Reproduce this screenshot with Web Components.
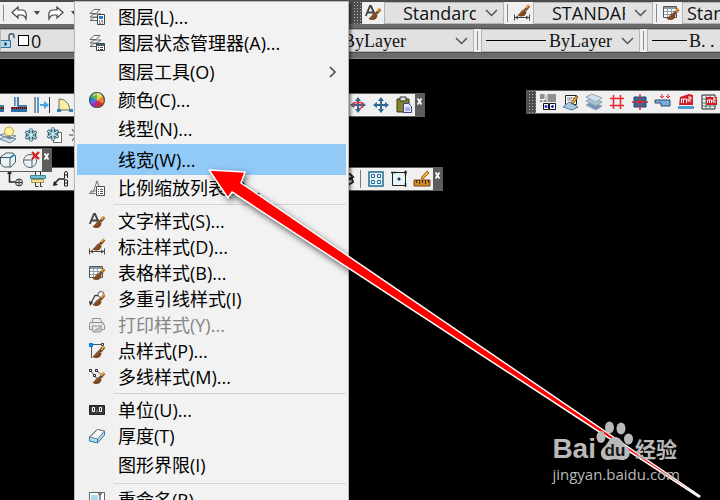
<!DOCTYPE html>
<html lang="zh-CN">
<head>
<meta charset="utf-8">
<title>格式</title>
<style>
  html, body {
    margin: 0;
    height: 100%;
    background: #000;
    font-family: "Open Sans", "Noto Sans CJK SC", sans-serif;
  }
</style>
</head>
<body>
<cad-window></cad-window>

<script>
const brush = `
  <path d="M15.2 4 11.5 8.5" stroke="#9a5a22" stroke-width="3"/>
  <path d="M14.8 3.6 12.4 6.6" stroke="#f0a83c" stroke-width="1.4"/>
  <path d="M12.4 7.4 9.6 9.2" stroke="#444" stroke-width="1.4"/>
  <path d="M10.6 8.2C7 7.6 7 11.6 3.6 13.4c2.6 2.4 8 2.6 9-3z" fill="#7a4822"/>
  <path d="M10 9.4c-2 0-2 2-3.4 3" stroke="#a56a3a"/>`
const stack = `<g stroke="#666" fill="#fafafa"><path d="M1 11.5h7l4-3H5zM1 8h7l4-3H5zM1 4.5h6l4-4H5z"/></g>`
const flake = `<g stroke="#2f5f70" stroke-width="3"><path d="M8 1.5v13M2.500 4.500l11 7M2.500 11.500l11-7"/><path d="M5.500 3.500 8 5.500l2.500-2M5.500 12.500l2.500-2 2.500 2M3.500 6.500v3m9-3v3" stroke-width="1.500"/></g>
  <g stroke="#d7f2f6" stroke-width="1.4"><path d="M8 2v12M3 5l10 6M3 11l10-6"/></g>`
const cross = color => `<path d="M8 2v12M2 8h12" stroke="${color}" stroke-width="2"/>
  <path d="M8 0 5 4h6zM8 16l-3-4h6zM0 8l4-3v6zM16 8l-4-3v6z" fill="${color}"/>`

const icons = {
  layer: stack + `<path d="M8.5 5.5h7v10h-7z" fill="#fff" stroke="#35474f"/><path d="M10 7h4v3h-4z" fill="#2a7cc0"/><path d="M10 12h1m1 0h2m-4 2h2m1 0h1" stroke="#333"/>`,
  layerState: stack + `<path d="M7.5 8.5h8v7h-8z" fill="#f4f6f7" stroke="#35474f"/><path d="M8 9h7v2H8z" fill="#4b5c66"/><path d="M9 12.5h1m1 0h3m-5 2h1m1 0h3" stroke="#444"/>`,
  color: `<g><path d="M8 8V0a8 8 0 0 1 6.9 4z" fill="#e7d53a"/><path d="M8 8 14.9 4a8 8 0 0 1 0 8z" fill="#f08035"/><path d="M8 8l6.9 4A8 8 0 0 1 8 16z" fill="#d82f2d"/><path d="M8 8v8a8 8 0 0 1-6.9-4z" fill="#a02fc0"/><path d="M8 8 1.1 12a8 8 0 0 1 0-8z" fill="#2f7be0"/><path d="M8 8 1.1 4A8 8 0 0 1 8 0z" fill="#54b63a"/></g><circle cx="8" cy="8" r="7.4" stroke="#555" stroke-width="1.2"/><path d="M4 3.5c2-2 6-2 8 0" stroke="#fff" opacity=".5" stroke-width="2"/>`,
  scale: `<path d="M8 1 4.5 11M8 1l2 5M2 12c4 0 6-2 7-5M.5 13.500h6M.5 13.500 3 10" stroke="#777"/><circle cx="8" cy="2" r="1.3" fill="#888"/><path d="M7.500 6.500h8v9h-8z" fill="#fff" stroke="#44515a"/><path d="M9 9.500h1m1 0h3m-5 2h1m1 0h3m-5 2h1m1 0h3" stroke="#555"/>`,
  text: `<path d="M.8 11 5 1h1l4 9M2.500 7.500h6" stroke="#454545" stroke-width="1.900"/>` + brush,
  dim: `<path d="M.5 9.500v6m15-6v6M1 12.500h14" stroke="#454545"/><path d="m1 12.500 3-2v4zm14 0-3-2v4z" fill="#454545"/><g transform="translate(0 -3.500)">${brush}</g>`,
  table: `<path d="M.5 1.500h13v11H.5z" fill="#fff" stroke="#555"/><path d="M1 2h12v2H1z" fill="#8799a3"/><path d="M1 6.500h12M1 9.500h12M4.500 4v8M8.500 4v8" stroke="#8ba0aa"/>` + brush,
  leader: `<circle cx="12" cy="3.500" r="3" fill="#fff" stroke="#555"/><path d="M9 4.500H6L2 12" stroke="#454545" stroke-width="1.300"/><path d="m0 10 4 1.500L1 15z" fill="#333"/>` + brush,
  plot: `<g stroke="#8f8f8f" fill="#ececec"><path d="M3.500 5V1.500h8l1 3.500"/><path d="M1 5.500h13l1.500 3v4H.500v-5z"/><path d="M3 9h9v6H4z"/></g><path d="M15 5 9 11c-3 0-3 2-5 3 3 2 6 1 7-2z" fill="#b5b5b5"/>`,
  point: `<path d="M2.500 2v13M3 1.500h11M4 14.500 13 4" stroke="#555"/><path d="M0 0h4v4H0z" fill="#0a84e8"/><path d="M12.500.500h2v2h-2z" fill="#fff" stroke="#333"/>` + brush,
  mline: `<path d="m2 2 3 4m3-4 5 4M5 7l4 3" stroke="#555"/><g fill="#fff" stroke="#222"><path d="M.5.500h2v2h-2zM6.500.500h2v2h-2zM4.500 5.500h2v2h-2z"/></g>` + brush,
  units: `<path d="M.5 3.500h15v9H.5z" fill="#3a3a3a" stroke="#222"/><g stroke="#fff"><path d="M3.500 5.500h2v4h-2zM10.500 5.500h2v4h-2zM7.500 9h1"/></g>`,
  thickness: `<path d="M.5 9 8 1.500l7.500 1.500v4l-7 8L.5 13z" fill="#a9dcf5" stroke="#3477a5"/><path d="M1 9 8.500 1.500 15.500 3 8.500 11z" fill="#f8fafb" stroke="#777"/><path d="M8.500 11v4" stroke="#3477a5"/>`,
  rename: `<path d="M.5.500h15v14H.5z" fill="#fff" stroke="#59656b"/><path d="M2 3h7v7H2z" fill="#a9daf2"/><path d="M9 2h4m-2 0v9m-2 0h4" stroke="#222"/>`,
  undo: `<path d="M1 7.500 7 2v3h4c4 0 5 4 4 9-1-3-2-4-5-4H7v3z" fill="#fff" stroke="#444" stroke-width="1.200"/>`,
  redo: `<path d="M15 7.500 9 2v3H5C1 5 0 9 1 14c1-3 2-4 5-4h3v3z" fill="#fff" stroke="#444" stroke-width="1.200"/>`,
  lock: `<path d="M8 7V3c0-3 5-3 5 0v2" stroke="#44606e" stroke-width="1.500"/><path d="M-.5 7.500h10v7h-10z" fill="#a7dcf4" stroke="#2f6f92"/><path d="M4.500 9.500v3" stroke="#222" stroke-width="2"/>`,
  hatch: `<path d="M4 0v9m3-9v9h9" stroke="#175a8e" stroke-width="1.500"/><path d="M5 0v9" stroke="#bcd9ee"/><path d="M0 12h16v3H0z" fill="#2c6fa6"/><path d="M0 11h16" stroke="#222" stroke-width="2"/><path d="M0 11h16" stroke="#e33" stroke-dasharray="1 1" stroke-width="1.500"/>`,
  offset: `<path d="M1 0v16M15.500 0v16" stroke="#333"/><path d="M4 0v16" stroke="#4aa0dc" stroke-width="2"/><path d="M6 7h4V4l5 4-5 4V9H6z" fill="#42a7e4"/>`,
  fillet: `<path d="M2 13V2c6 0 10 4 11 11z" fill="#f6edab" stroke="#6f7049"/><path d="M0 12h4v3H0zM12 12h4v3h-4z" fill="#3283bc"/>`,
  bulb: `<path d="M0 12 6 9l10 3-6 4zM0 8l6-2 10 3-6 3z" fill="#cee1ed" stroke="#6e879a"/><circle cx="9" cy="4.500" r="4.500" fill="#fff39b" stroke="#c6a22c"/><path d="M7 8.500h4v3H7z" fill="#7b8790"/>`,
  flake,
  flakeBox: `<path d="M7.500 5.500h8v10h-8z" fill="#fff" stroke="#666"/><g transform="translate(-1 -1)">${flake}</g>`,
  sun: `<circle cx="9" cy="8" r="4" fill="#fff4c9" stroke="#926d34"/><path d="m3 2 2 3M3 14l2-3M0 8h4" stroke="#444"/>`,
  box: `<path d="M.5 5 6 1h7l2.500 3v6L11 15H4L.5 12z" fill="#edf2f5" stroke="#425866"/><path d="M1 5.500h9L15 3M10 6v9" stroke="#415866"/><path d="m10 6 4-3" stroke="#278fd2" stroke-width="2"/>`,
  boxOff: `<circle cx="7" cy="9" r="6.500" fill="#edf2f5" stroke="#526570"/><path d="M1 8h8l3-4M9 8v7" stroke="#526570"/><path d="m9 0 7 7m0-7L9 7" stroke="#d51e1e" stroke-width="2.200"/>`,
  node: `<path d="M2.500 2v9h8" stroke="#222" stroke-width="1.600"/><path d="m0 3 2.500-4L5 3z" fill="#222"/><circle cx="12" cy="11.500" r="3.500" fill="#ddd" stroke="#333"/><path d="M9 11.500h6M12 8v7" stroke="#333"/>`,
  align: `<path d="M.5 4.500h15v3H.5z" fill="#72bed3" stroke="#3b8797"/><path d="M1.500 8.500h12v3h-12z" fill="#f4e59b" stroke="#a69345"/><path d="M5.500 0v4m5-4v4m-5 8v3.500h3m2-4v4h2" stroke="#333"/>`,
  label: `<path d="m1 13 5-5h6" stroke="#222" stroke-width="1.500"/><path d="m0 15 1-5 4 4z" fill="#222"/><path d="M11.500 7V2l1.500-2 1.500 2v5m-3-3h3M11.500 9v6h3v-6zM11.500 12h3" stroke="#222"/>`,
  moveRed: cross('#2f6896') + `<path d="M4 10V6l4-1 4 1v4l-3 2" stroke="#f22d38" stroke-width="1.500"/>`,
  move: cross('#2d6a98'),
  paste: `<path d="M1 2h12v13H1z" fill="#87852c" stroke="#3a3913"/><path d="M4 0h6v4H4z" fill="#ddd" stroke="#333"/><path d="M7.500 6.500h5l3 3v6h-8z" fill="#e9ebff" stroke="#3d4397"/><path d="M9 11h5m-5 2h5" stroke="#6f78c8"/>`,
  coil: `<path d="m5 4 7-1 3 3-7 3M7 9l7-1 1 3-5 3" stroke="#222" stroke-width="2"/>`,
  grid: `<path d="M1 1h14v14H1z" fill="#e9f5fa" stroke="#236b94" stroke-width="1.500"/><path d="M3.500 3.500h3v3h-3zM9.500 3.500h3v3h-3zM3.500 9.500h3v3h-3zM9.500 9.500h3v3h-3z" stroke="#236b94"/>`,
  viewport: `<path d="M1.500 1.500h13v13h-13z" fill="#e3f4fb" stroke="#222"/><path d="M6.500 8h3M8 6.500v3M0 1.500h5m8 0h3m-1.500-2v5M14.500 12v4" stroke="#222" stroke-width="1.500"/>`,
  measure: `<path d="M0 9h16v6H0z" fill="#d28a24" stroke="#754612"/><path d="M2.500 9v3m3-3v4m3-4v3m3-3v4m3-4v3" stroke="#4b2e0d"/><path d="m7 7 6-7 2 2-6 6z" fill="#f6b52e" stroke="#9c6210"/>`,
  blocks: `<path d="M0 0h16v8H0z" fill="#8d9091"/><path d="M0 5.500h5v-5m0 0h2v9H3v-4" stroke="#fff"/><path d="M3.500 9.500h5v6h-5zM9.500 9.500h6v6h-6z" fill="#fff" stroke="#111"/><path d="M4.500 12.500h3m-1.500-1.500v3m5-1.500h3m-1.500-1.500v3" stroke="#1a20d8" stroke-width="1.400"/>`,
  notes: `<path d="M2.500 1.500h11v9h-11z" fill="#fff" stroke="#222"/><path d="M4 4h7M4 6h5" stroke="#777"/><path d="m0 13 6-5 9 5-6 3z" fill="#a9cadf" stroke="#557997"/><path d="m8 9 5-7 2 1-5 7z" fill="#efb62f" stroke="#7c5119"/>`,
  sheets: `<g stroke="#8ca3b7"><path d="m0 11 6-3 10 4-6 4z" fill="#7896b3"/><path d="m0 7 6-3 10 4-6 4z" fill="#aac4d6"/><path d="m0 3 6-3 10 4-6 4z" fill="#d4e2eb"/></g>`,
  hash: `<path d="M4.500 1v14m7-14v14M1 4.500h14M1 11.500h14" stroke="#e42431" stroke-width="1.500"/>`,
  center: `<path d="M2 3h12v10H2z" fill="#306d9c" stroke="#204d72"/><path d="M8 0v16M0 8h16" stroke="#e32530" stroke-width="1.500"/>`,
  section: `<path d="M0 6h15v6H6V9H0z" fill="#7baade" stroke="#334b65"/><path d="M7 0v4m6-4v4m-8-2 2 2 2-2m2 0 2 2 2-2" stroke="#e32530"/>`,
  area: `<path d="M0 12h16v3H0z" fill="#4e9bd3"/><path d="m1 11 1-8 9-3 4 1v10z" fill="#cf1f29"/><path d="M3.500 9V5h2v4m0-4h3v4M10 3h3v2h-3v2h3" stroke="#fff"/>`,
  areaTable: `<path d="M1 1h13v14H1z" fill="#f5faf8" stroke="#222"/><path d="M1 5h13M1 9h13M1 12h13M5 1v14m4-14v14" stroke="#467965"/><path d="M5 3h11v8H5z" fill="#cf1f29"/><path d="M6.500 9V6h2v3m0-3h2v3M12 4h2v2h-2v2h3" stroke="#fff"/>`
}

// name -> 16px glyph
class CadIcon extends HTMLElement {
  constructor() {
    super()
    this.attachShadow({ mode: 'open' })
  }
  connectedCallback() {
    this.shadowRoot.innerHTML = `
      <style>
        :host { display: block; width: 16px; height: 16px; flex: none; }
        svg { display: block; width: 100%; height: 100%; overflow: visible; }
      </style>
      <svg viewBox="0 0 16 16" fill="none" aria-hidden="true">${icons[this.getAttribute('name')] || ''}</svg>
    `
  }
}
customElements.define('cad-icon', CadIcon)

class ToolButton extends HTMLElement {
  constructor() {
    super()
    this.attachShadow({ mode: 'open' })
  }
  connectedCallback() {
    const icon = this.getAttribute('icon')
    this.shadowRoot.innerHTML = `
      <style>
        :host { display: block; flex: none; }
        button {
          display: grid;
          place-items: center;
          width: 23px;
          height: 22px;
          padding: 0;
          border: 0;
          background: none;
        }
      </style>
      <button aria-label="${icon}"><cad-icon name="${icon}"></cad-icon></button>
    `
  }
}
customElements.define('tool-button', ToolButton)

// floating palette: default slot at the left, "end" slot at the right
class ToolPalette extends HTMLElement {
  constructor() {
    super()
    this.attachShadow({ mode: 'open' }).innerHTML = `
      <style>
        :host {
          display: flex;
          box-sizing: border-box;
          height: 24px;
          border: 1px solid #5c5c5c;
          background: #f0f0f0;
        }
        .group { display: flex; }
        .end { margin-left: auto; }
        .close, .grip { display: none; width: 9px; background: #5d5d5d; }
        :host([closable]) .close { display: block; }
        :host([grip]) .grip {
          display: block;
          background: radial-gradient(circle, #aaa 1px, transparent 1px) 1px 2px / 3px 3px #4e4e4e;
        }
        button { padding: 0; border: 0; }
        .close svg { display: block; margin: 0 2px 7px; }
      </style>
      <span class="grip"></span>
      <div class="group"><slot></slot></div>
      <div class="group end"><slot name="end"></slot></div>
      <button class="close" aria-label="关闭"><svg width="5" height="7" viewBox="0 0 5 7"><path d="M.5.500l4 6m0-6-4 6" stroke="#fff" stroke-width="1.800"/></svg></button>
    `
  }
}
customElements.define('tool-palette', ToolPalette)

class ComboBox extends HTMLElement {
  constructor() {
    super()
    this.attachShadow({ mode: 'open' })
  }
  connectedCallback() {
    const label = this.getAttribute('label')
    const value = this.getAttribute('value')
    this.shadowRoot.innerHTML = `
      <style>
        :host {
          display: grid;
          flex: none;
          box-sizing: border-box;
          align-items: center;
          border: 1px solid #b4b4b4;
          background: #e1e1e1;
          overflow: hidden;
        }
        select, .lead, .arrow { grid-area: 1 / 1; }
        select {
          appearance: none;
          width: 100%;
          height: 100%;
          margin: 0;
          padding: 0 27px 0 var(--inset, 18px);
          border: 0;
          border-radius: 0;
          background: none;
          color: #111;
          font: inherit;
          line-height: 20px;
        }
        .lead { display: flex; align-items: center; pointer-events: none; }
        .arrow { justify-self: end; margin-right: 5px; pointer-events: none; }
      </style>
      <select aria-label="${label}"><option>${value}</option></select>
      <span class="lead"><slot></slot></span>
      <svg class="arrow" width="13" height="8" viewBox="0 0 13 8"><path d="M1 1l5.500 5.500L12 1" fill="none" stroke="#555" stroke-width="1.500"/></svg>
    `
  }
}
customElements.define('combo-box', ComboBox)

class MenuEntry extends HTMLElement {
  constructor() {
    super()
    this.attachShadow({ mode: 'open' })
  }
  connectedCallback() {
    const icon = this.getAttribute('icon')
    this.shadowRoot.innerHTML = `
      <style>
        :host { display: block; }
        button {
          display: grid;
          grid-template-columns: 41px 1fr auto;
          align-items: center;
          width: 100%;
          height: ${icon ? 26 : 31}px;
          padding: 0;
          border: 0;
          background: none;
          color: #000;
          font: inherit;
          text-align: left;
          white-space: nowrap;
        }
        button:disabled { color: #858585; }
        :host([active]) button { background: #91c9f7; }
        cad-icon { margin-left: 12px; }
        svg { margin-right: 9px; }
      </style>
      <button role="menuitem" ${this.hasAttribute('disabled') ? 'disabled' : ''}>
        ${icon ? `<cad-icon name="${icon}"></cad-icon>` : '<span></span>'}
        <slot></slot>
        ${this.hasAttribute('submenu') ? '<svg width="8" height="12" viewBox="0 0 8 12"><path d="M1 1l5 5-5 5" fill="none" stroke="#444" stroke-width="1.500"/></svg>' : ''}
      </button>
    `
  }
}
customElements.define('menu-entry', MenuEntry)

class FormatMenu extends HTMLElement {
  constructor() {
    super()
    this.attachShadow({ mode: 'open' }).innerHTML = `
      <style>
        :host {
          display: block;
          box-sizing: border-box;
          padding: 2px;
          border: 1px solid #b8b8b8;
          background: linear-gradient(90deg, #f0f0f0 39px, #f2f2f2 39px);
          box-shadow: 2px 2px 3px rgba(0, 0, 0, .5);
          font-size: 18px;
          line-height: 24px;
        }
        hr { height: 1px; margin: 3px 0 3px 37px; border: 0; background: #d4d4d4; }
      </style>
      <div role="menu">
        <menu-entry icon="layer">图层(L)...</menu-entry>
        <menu-entry icon="layerState">图层状态管理器(A)...</menu-entry>
        <menu-entry submenu>图层工具(O)</menu-entry>
        <menu-entry icon="color">颜色(C)...</menu-entry>
        <menu-entry>线型(N)...</menu-entry>
        <menu-entry active>线宽(W)...</menu-entry>
        <menu-entry icon="scale">比例缩放列表(E)...</menu-entry>
        <hr>
        <menu-entry icon="text">文字样式(S)...</menu-entry>
        <menu-entry icon="dim">标注样式(D)...</menu-entry>
        <menu-entry icon="table">表格样式(B)...</menu-entry>
        <menu-entry icon="leader">多重引线样式(I)</menu-entry>
        <menu-entry icon="plot" disabled>打印样式(Y)...</menu-entry>
        <menu-entry icon="point">点样式(P)...</menu-entry>
        <menu-entry icon="mline">多线样式(M)...</menu-entry>
        <hr>
        <menu-entry icon="units">单位(U)...</menu-entry>
        <menu-entry icon="thickness">厚度(T)</menu-entry>
        <menu-entry>图形界限(I)</menu-entry>
        <hr>
        <menu-entry icon="rename">重命名(R)...</menu-entry>
      </div>
    `
  }
}
customElements.define('format-menu', FormatMenu)

class SiteMark extends HTMLElement {
  constructor() {
    super()
    this.attachShadow({ mode: 'open' }).innerHTML = `
      <style>
        :host { display: block; color: #b9b9b9; white-space: nowrap; }
        .brand { display: flex; align-items: flex-end; height: 44px; }
        b { font: bold 28px/30px "Liberation Sans", sans-serif; }
        .paw {
          display: grid;
          width: 38px;
          height: 40px;
          margin: 0 1px 3px 0;
        }
        .paw svg, .paw span { grid-area: 1 / 1; }
        .paw span {
          align-self: end;
          justify-self: center;
          color: #161616;
          font: bold 17px/20px "Liberation Sans", sans-serif;
        }
        .zh { font: bold 21px/30px "Noto Sans CJK SC", sans-serif; margin-bottom: 1px; }
        .url { font-size: 15px; line-height: 20px; }
      </style>
      <div class="brand">
        <b>Bai</b>
        <div class="paw">
          <svg width="38" height="40" viewBox="0 0 38 40" fill="currentColor">
            <ellipse cx="5" cy="16" rx="4.500" ry="6"/><ellipse cx="13.500" cy="6.500" rx="4.500" ry="6"/>
            <ellipse cx="25" cy="7.500" rx="4.500" ry="6"/><ellipse cx="32.500" cy="18" rx="4.500" ry="5.500"/>
            <path d="M19 16c6 0 7 6 12 10 6 5 2 14-6 13-4-1-8-1-12 0-8 1-11-8-5-13 4-3 5-10 11-10z"/>
          </svg>
          <span>du</span>
        </div>
        <span class="zh">经验</span>
      </div>
      <div class="url">jingyan.baidu.com</div>
    `
  }
}
customElements.define('site-mark', SiteMark)

class CadWindow extends HTMLElement {
  constructor() {
    super()
    this.attachShadow({ mode: 'open' }).innerHTML = `
      <style>
        :host {
          display: block;
          position: relative;
          height: 100%;
          overflow: hidden;
          background: #000;
        }
        header {
          border-top: 2px solid #4c4c4c;
          border-bottom: 1px solid #8a8a8a;
          background: #6b6b6b;
          overflow: hidden;
        }
        .row { display: flex; height: 22px; margin-bottom: 4px; background: #f0f0f0; font-size: 18px; }
        .row + .row {
          height: 23px;
          margin-bottom: 5px;
          border-top: 1px solid #4c4c4c;
          border-bottom: 1px solid #4c4c4c;
          font-family: "Liberation Serif", serif;
        }
        .history {
          display: flex;
          align-items: center;
          width: 348px;
          border-right: 4px solid #4c4c4c;
          flex: none;
        }
        .history i {
          border: 3px solid transparent;
          border-top: 4px solid #444;
          border-bottom: 0;
          margin: 0 8px 0 7px;
        }
        .bar { width: 1px; height: 16px; margin: 0 7px 0 3px; background: #8a8a8a; flex: none; }
        .grip {
          flex: none;
          width: 10px;
          background: radial-gradient(circle, #bbb 1px, transparent 1px) 1px 2px / 3px 3px #4e4e4e;
        }
        .style { display: flex; align-items: center; justify-content: center; width: 22px; flex: none; }
        .style + combo-box { width: 120px; }
        .gap { width: 7px; display: flex; justify-content: center; flex: none; }
        .gap::before { content: ""; width: 1px; margin: 2px 0; background: #8a8a8a; }
        .line { height: 1px; background: #000; margin-left: 4px; }
        .swatch { width: 9px; height: 9px; margin-left: 1px; border: 1px solid #000; background: #fff; }

        tool-palette, format-menu, site-mark, .pointer { position: absolute; }
        .modify { top: 93px; left: -17px; width: 442px; }
        .layers { top: 123px; left: -5px; width: 300px; }
        .dims { top: 167px; left: -21px; width: 464px; }
        .views { top: 148px; left: -5px; }
        .extra { top: 90px; left: 526px; right: -10px; }
        .rule { width: 1px; margin: 2px 3px; background: #777; }
        format-menu { top: 1px; left: 74px; width: 275px; }
        .pointer { top: 0; left: 0; filter: drop-shadow(2px 3px 3px rgba(0, 0, 0, .6)); pointer-events: none; }
        site-mark { right: 40px; bottom: 16px; }
      </style>
      <header>
        <div class="row">
          <div class="history">
            <span class="bar"></span>
            <cad-icon name="undo"></cad-icon><i></i>
            <cad-icon name="redo"></cad-icon><i></i>
          </div>
          <span class="grip"></span>
          <span class="style"><cad-icon name="text"></cad-icon></span>
          <combo-box label="文字样式" value="Standard"></combo-box>
          <span class="gap"></span>
          <span class="style"><cad-icon name="dim"></cad-icon></span>
          <combo-box label="标注样式" value="STANDARD"></combo-box>
          <span class="gap"></span>
          <span class="style"><cad-icon name="table"></cad-icon></span>
          <combo-box label="表格样式" value="Standard" style="--inset: 4px"></combo-box>
        </div>
        <div class="row">
          <combo-box label="图层" value="0" style="width: 290px; --inset: 30px; font-family: 'Open Sans', sans-serif">
            <cad-icon name="lock"></cad-icon><span class="swatch"></span>
          </combo-box>
          <span class="gap"></span>
          <combo-box label="颜色" value="ByLayer" style="width: 177px; --inset: 45px"></combo-box>
          <span class="gap"></span>
          <combo-box label="线型" value="ByLayer" style="width: 159px; --inset: 67px">
            <span class="line" style="width: 60px"></span>
          </combo-box>
          <span class="gap"></span>
          <combo-box label="线宽" value="B. . ." style="width: 120px; --inset: 41px">
            <span class="line" style="width: 35px"></span>
          </combo-box>
        </div>
      </header>

      <tool-palette class="modify" closable>
        <tool-button icon="hatch"></tool-button>
        <tool-button icon="hatch"></tool-button>
        <tool-button icon="offset"></tool-button>
        <tool-button icon="fillet"></tool-button>
        <tool-button slot="end" icon="moveRed"></tool-button>
        <tool-button slot="end" icon="move"></tool-button>
        <tool-button slot="end" icon="paste"></tool-button>
      </tool-palette>
      <tool-palette class="layers">
        <tool-button icon="bulb"></tool-button>
        <tool-button icon="flake"></tool-button>
        <tool-button icon="flakeBox"></tool-button>
        <tool-button icon="sun"></tool-button>
      </tool-palette>
      <tool-palette class="dims" closable>
        <tool-button icon="node"></tool-button>
        <tool-button icon="node"></tool-button>
        <tool-button icon="align"></tool-button>
        <tool-button icon="label"></tool-button>
        <tool-button slot="end" icon="coil"></tool-button>
        <span slot="end" class="rule"></span>
        <tool-button slot="end" icon="grid"></tool-button>
        <tool-button slot="end" icon="viewport"></tool-button>
        <tool-button slot="end" icon="measure"></tool-button>
      </tool-palette>
      <tool-palette class="views" closable>
        <tool-button icon="box"></tool-button>
        <tool-button icon="boxOff"></tool-button>
      </tool-palette>
      <tool-palette class="extra" grip>
        <tool-button icon="blocks"></tool-button>
        <tool-button icon="notes"></tool-button>
        <tool-button icon="sheets"></tool-button>
        <tool-button icon="hash"></tool-button>
        <tool-button icon="center"></tool-button>
        <tool-button icon="section"></tool-button>
        <tool-button icon="area"></tool-button>
        <tool-button icon="areaTable"></tool-button>
      </tool-palette>

      <format-menu></format-menu>
      <svg class="pointer" width="720" height="500" viewBox="0 0 720 500" aria-hidden="true">
        <path d="M209 170 245 172 241 183 700 496 699 497 232 192 228 198z" fill="#fe0000" stroke="#fff" stroke-width="1.500" stroke-linejoin="round"/>
      </svg>
      <site-mark></site-mark>
    `
  }
}
customElements.define('cad-window', CadWindow)
</script>
</body>
</html>
